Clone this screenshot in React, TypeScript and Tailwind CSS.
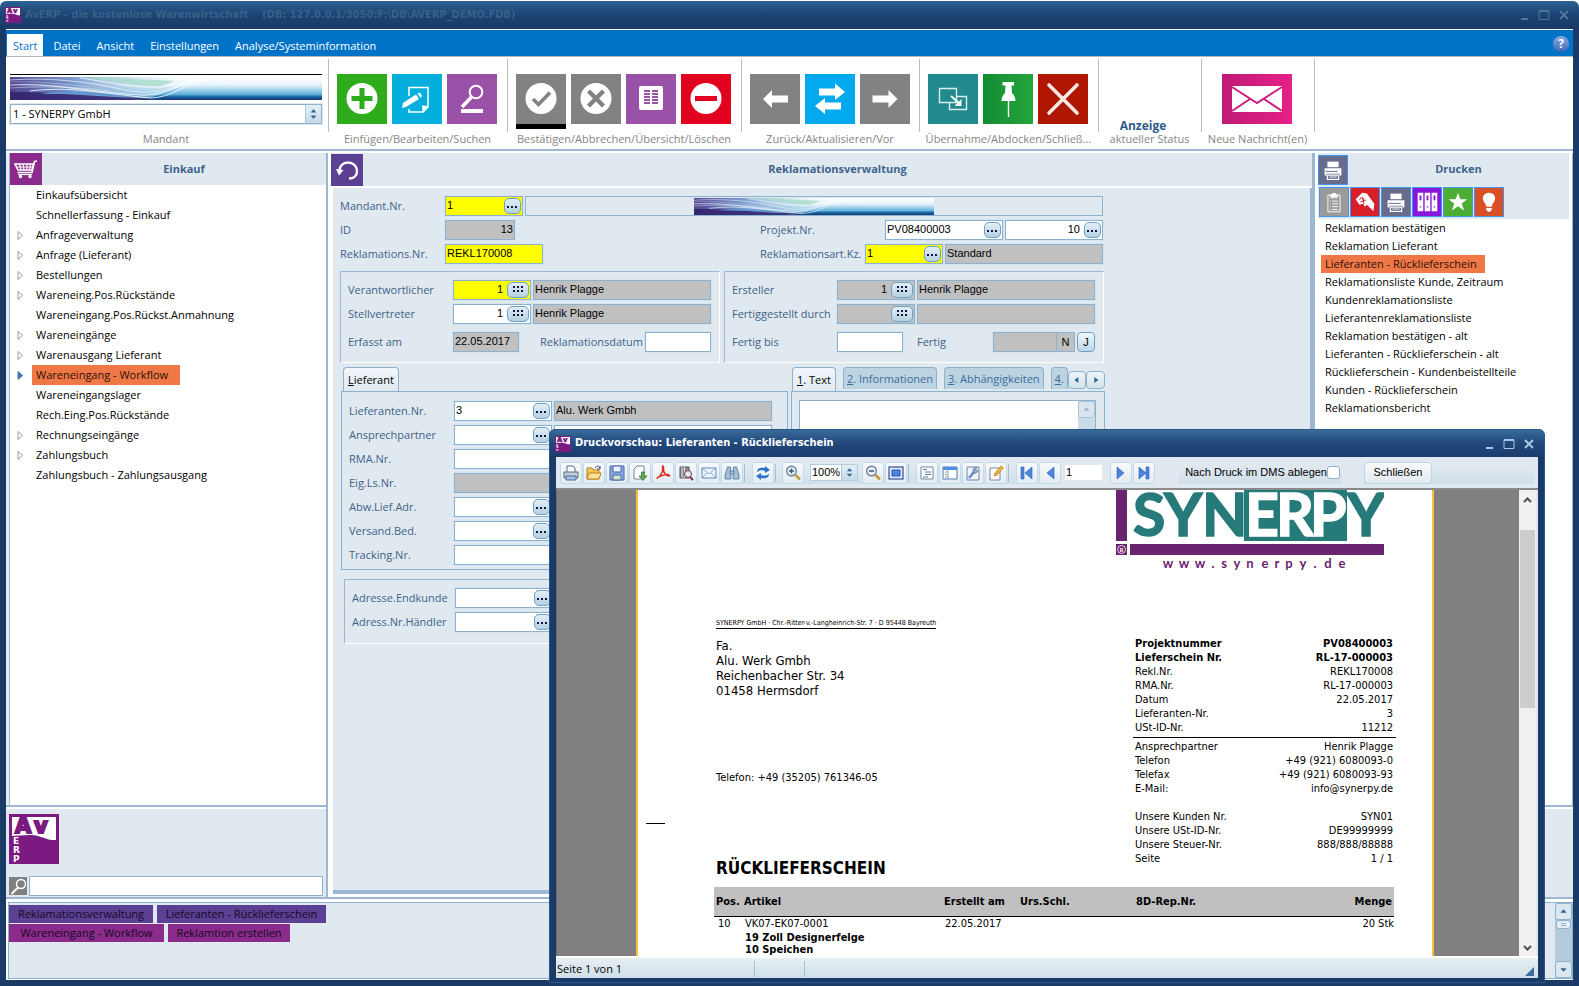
import React from 'react';

const SANS = "font-['Open_Sans','Noto_Sans',sans-serif]";
const ARIAL = "font-['Liberation_Sans',Arial,sans-serif]";
const TAHOMA = "font-['DejaVu_Sans_Condensed','DejaVu_Sans',sans-serif]";

/* ---------- Shared drawings ---------- */

const AvLogo = ({ className }: { className: string }) => (
    <svg viewBox="0 0 50 50" className={className} role="img" aria-label="AvERP">
        <rect width="50" height="50" fill="#7b1a80" />
        <path d="M3 3H47V26C38 27 30 20 20 21C13 21 8 22 3 22Z" fill="#fff" />
        <text x="6 25" y="19" fontSize="21" fontWeight="700" fontFamily="DejaVu Sans, sans-serif" fill="#7b1a80" stroke="#7b1a80" strokeWidth="2">Av</text>
        <g fontSize="9" fontWeight="700" fontFamily="DejaVu Sans, sans-serif" fill="#fff">
            <text x="4" y="30">E</text>
            <text x="4" y="39">R</text>
            <text x="4" y="48">P</text>
        </g>
    </svg>
);

const WaveBanner = ({ className, id }: { className: string; id: string }) => (
    <svg viewBox="0 0 312 23" preserveAspectRatio="none" className={className} aria-hidden="true">
        <defs>
            <linearGradient id={`${id}-sky`} x1="0" y1="0" x2="0" y2="1">
                <stop offset="0" stopColor="#ffffff" />
                <stop offset="0.35" stopColor="#e6f3fa" />
                <stop offset="0.75" stopColor="#62b2dc" />
                <stop offset="0.85" stopColor="#1c6ba8" />
                <stop offset="1" stopColor="#17356f" />
            </linearGradient>
            <linearGradient id={`${id}-left`} x1="0" y1="0" x2="1" y2="0">
                <stop offset="0" stopColor="#4f4390" />
                <stop offset="0.35" stopColor="#6f93cc" stopOpacity="0.9" />
                <stop offset="0.75" stopColor="#c9e2f0" stopOpacity="0.5" />
                <stop offset="1" stopColor="#ffffff" stopOpacity="0" />
            </linearGradient>
        </defs>
        <rect width="312" height="23" fill={`url(#${id}-sky)`} />
        <path d="M0 0H185C165 4 160 22 120 23H0Z" fill={`url(#${id}-left)`} />
        <path d="M60 1C100 0 120 10 150 9L165 4C140 2 120 3 100 0Z" fill="#a9dccb" opacity="0.8" />
        <path d="M0 15C40 14 80 20 140 21L120 23H0Z" fill="#32206b" opacity="0.85" />
        <path d="M30 17C60 13 90 16 130 19L110 20C80 17 60 17 30 17Z" fill="#5f97d0" />
        <g fill="none" stroke="#fff">
            <path d="M0 8C50 6 70 14 130 18C160 19 170 5 195 1" strokeWidth="1.2" opacity="0.7" />
            <path d="M0 3C40 0 80 5 110 12C140 20 165 12 185 2" strokeWidth="1" opacity="0.6" />
            <path d="M20 14C60 9 90 16 140 21C165 20 170 8 200 1" strokeWidth="1" opacity="0.8" />
            <path d="M70 1C100 5 120 11 150 10C170 8 180 1 225 6" strokeWidth="0.8" opacity="0.9" />
            <path d="M0 11C30 9 60 9 100 14" strokeWidth="1.2" opacity="0.4" />
            <path d="M0 5C30 4 50 7 80 10" strokeWidth="1" opacity="0.3" />
        </g>
    </svg>
);

const CartIcon = () => (
    <svg viewBox="0 0 32 32" className="size-8 bg-[#8b2b8b]" fill="none" stroke="#fff">
        <path d="M27 8L24.500 8.500L22 19.500H7.500" strokeWidth="1.600" />
        <path d="M5 11H23.500L22 17H8Z" strokeWidth="1.600" />
        <path d="M9.500 11L11 17M13 11L14 17M17 11V17M20.500 11L19.500 17M6 14H23" strokeWidth="1.200" />
        <path d="M8 21.500H22" strokeWidth="1.200" />
        <circle cx="10.500" cy="23.500" r="1.700" fill="#fff" stroke="none" />
        <circle cx="20" cy="23.500" r="1.700" fill="#fff" stroke="none" />
    </svg>
);

const PrinterIcon = () => (
    <svg viewBox="0 0 30 30" className="size-full">
        <rect width="30" height="30" fill="#676b8c" />
        <path d="M9 6H21V12H9Z" fill="#fff" />
        <path d="M6 13H24V21H22V19H8V21H6Z" fill="#fff" />
        <path d="M9 20.500H21V25H9Z" fill="none" stroke="#fff" strokeWidth="1.300" />
        <path d="M11 22H19M11 23.500H19M7 16.500H20" stroke="#676b8c" strokeWidth="1" />
        <path d="M11 22.500H19" stroke="#fff" strokeWidth="1" />
    </svg>
);

/* ---------- Window frame pieces ---------- */

const WindowControls = ({ color }: { color: string }) => (
    <div className={`flex items-center gap-2 ${color}`}>
        <button type="button" aria-label="Minimieren">
            <svg viewBox="0 0 12 12" className="size-3"><path d="M3 10H10" stroke="currentColor" strokeWidth="2" /></svg>
        </button>
        <button type="button" aria-label="Maximieren">
            <svg viewBox="0 0 12 12" className="size-3"><path d="M1 2.500H11V10.500H1Z" fill="none" stroke="currentColor" /><path d="M1 2H11" stroke="currentColor" strokeWidth="2" /></svg>
        </button>
        <button type="button" aria-label="Fenster schließen">
            <svg viewBox="0 0 12 12" className="size-3"><path d="M2 2L10 10M10 2L2 10" stroke="currentColor" strokeWidth="2" /></svg>
        </button>
    </div>
);

const Spinner = () => (
    <svg viewBox="0 0 16 18" className="h-full w-4 border-l border-[#a8c8dc] bg-gradient-to-b from-[#e4eff6] to-[#c6dae7]" preserveAspectRatio="none">
        <path d="M8 4L11 7.500H5ZM8 14L11 10.500H5Z" fill="#35679a" />
    </svg>
);

/* ---------- Ribbon ---------- */

const Tile = ({ label, bg, children, active }: { label: string; bg: string; children: React.ReactNode; active?: boolean }) => (
    <button type="button" aria-label={label} className={`h-[50px] w-[50px] shrink-0 ${bg} ${active ? 'shadow-[0_5px_0_#000]' : ''}`}>
        <svg viewBox="0 0 50 50" className="size-full" fill="none">{children}</svg>
    </button>
);

const RibbonGroup = ({ caption, width, children }: { caption: string; width: string; children: React.ReactNode }) => (
    <div className={`relative flex shrink-0 flex-col pt-[17px] ${width}`}>
        <div className="flex h-[57px] items-start justify-center gap-[5px] pr-[3px]">{children}</div>
        <div className="pr-[2px] text-center text-[11px] leading-4 whitespace-nowrap text-[#858585]">{caption}</div>
        <div className="absolute top-[2px] right-0 h-[73px] w-px bg-[#bdbdbd]" />
    </div>
);

const Ribbon = () => (
    <div className="flex h-[92px] bg-white">
        <div className="relative flex w-[323px] shrink-0 flex-col pt-[17px] pr-[7px] pl-1">
            <div className="h-px bg-black" />
            <WaveBanner id="mandant" className="mt-[2px] h-[23px] w-full" />
            <div className="mt-[4px] flex h-5 border border-[#8db2cf] shadow-[0_0_0_1px_#dbe8f2]">
                <select aria-label="Mandant" defaultValue="1" className="min-w-0 flex-1 appearance-none pl-[2px] text-[11px] leading-4 text-black outline-none">
                    <option value="1">1 - SYNERPY GmbH</option>
                </select>
                <Spinner />
            </div>
            <div className="mt-[7px] text-center text-[11px] leading-4 text-[#858585]">Mandant</div>
            <div className="absolute top-[2px] right-0 h-[73px] w-px bg-[#bdbdbd]" />
        </div>
        <RibbonGroup caption="Einfügen/Bearbeiten/Suchen" width="w-[179px]">
            <Tile label="Einfügen" bg="bg-[#2fac1c]">
                <circle cx="25" cy="24.500" r="15.500" fill="#fff" />
                <path d="M25 14V35M14.500 24.500H35.500" stroke="#2fac1c" strokeWidth="5" />
            </Tile>
            <Tile label="Bearbeiten" bg="bg-[#05afdd]">
                <path d="M17 22V13.500H36V33L31 38H17V35" stroke="#fff" strokeWidth="1.500" />
                <path d="M36 32L30 31.500L30.500 38Z" fill="#fff" />
                <path d="M11 29L24 20.500L27 25L14 33L10 34Z" fill="#fff" />
                <path d="M25.500 19.500L28 18.500L30 22L28.500 24Z" fill="#fff" />
            </Tile>
            <Tile label="Suchen" bg="bg-[#9a52a8]">
                <circle cx="29" cy="18" r="6.300" stroke="#fff" strokeWidth="2" />
                <path d="M24.500 23L15 33" stroke="#fff" strokeWidth="3.500" />
                <path d="M14 37H36" stroke="#fff" strokeWidth="4" />
            </Tile>
        </RibbonGroup>
        <RibbonGroup caption="Bestätigen/Abbrechen/Übersicht/Löschen" width="w-[234px]">
            <Tile label="Bestätigen" bg="bg-[#828282]" active>
                <circle cx="25" cy="24.500" r="15.500" fill="#fff" />
                <path d="M17 25L22.500 30.500L34 18.500" stroke="#828282" strokeWidth="3.600" />
            </Tile>
            <Tile label="Abbrechen" bg="bg-[#828282]">
                <circle cx="25" cy="24.500" r="15.500" fill="#fff" />
                <path d="M17.500 17L32.500 32M32.500 17L17.500 32" stroke="#828282" strokeWidth="4.400" />
            </Tile>
            <Tile label="Übersicht" bg="bg-[#9a52a8]">
                <rect x="13" y="12" width="24" height="24" rx="2" fill="#fff" />
                <path d="M18 17H24M18 20H24M18 23H24M18 26H24M18 29H24M26 17H32M26 20H32M26 23H32M26 26H32M26 29H32" stroke="#9a52a8" strokeWidth="2" />
            </Tile>
            <Tile label="Löschen" bg="bg-[#e2001f]">
                <circle cx="25" cy="24.500" r="15.500" fill="#fff" />
                <path d="M14 24.500H36" stroke="#e2001f" strokeWidth="5" />
            </Tile>
        </RibbonGroup>
        <RibbonGroup caption="Zurück/Aktualisieren/Vor" width="w-[178px]">
            <Tile label="Zurück" bg="bg-[#828282]">
                <path d="M13 25L22 16V21.500H38V28.500H22V34Z" fill="#fff" />
            </Tile>
            <Tile label="Aktualisieren" bg="bg-[#02a9ed]">
                <path d="M40 18L30 9.500V14.500H14V21.500H30V26Z" fill="#fff" />
                <path d="M10 32L20 24V28.500H36V35.500H20V40Z" fill="#fff" />
            </Tile>
            <Tile label="Vor" bg="bg-[#828282]">
                <path d="M37.500 25L28.500 16V21.500H12.500V28.500H28.500V34Z" fill="#fff" />
            </Tile>
        </RibbonGroup>
        <RibbonGroup caption="Übernahme/Abdocken/Schließ..." width="w-[179px]">
            <Tile label="Übernahme" bg="bg-[#22898f]">
                <path d="M11.500 14.500H28.500V28.500H11.500Z" stroke="#d9eeee" strokeWidth="1.400" />
                <path d="M28.500 22.500H38.500V35.500H21.500V28.500" stroke="#d9eeee" strokeWidth="1.400" />
                <path d="M23 22L32 30" stroke="#fff" strokeWidth="2" />
                <path d="M33.500 25V32H26.500Z" fill="#fff" />
            </Tile>
            <Tile label="Abdocken" bg="bg-gradient-to-r from-[#128c34] to-[#25a53c]">
                <path d="M19.500 8H31V11.500H28.500L29 19C31 21 32.500 23.500 32.500 27H18.500C18.500 23.500 20 21 22 19L22.500 11.500H19.500Z" fill="#fff" />
                <path d="M25.500 27V43" stroke="#fff" strokeWidth="1.400" />
            </Tile>
            <Tile label="Schließen" bg="bg-[#b01702]">
                <path d="M11 11L39 39M39 11L11 39" stroke="#fbe9e4" strokeWidth="3.600" strokeLinecap="round" />
            </Tile>
        </RibbonGroup>
        <RibbonGroup caption="aktueller Status" width="w-[103px]">
            <span className="self-end pr-3 text-[12px] leading-[10px] font-bold text-[#2f5b8b]">Anzeige</span>
        </RibbonGroup>
        <RibbonGroup caption="Neue Nachricht(en)" width="w-[113px]">
            <button type="button" aria-label="Neue Nachrichten" className="h-[50px] w-[70px] bg-gradient-to-r from-[#bf1a76] to-[#e62088]">
                <svg viewBox="0 0 70 50" className="size-full">
                    <rect x="10" y="12" width="50" height="26" fill="#fff" />
                    <path d="M10 13L35 29L60 13M10 37L28 25M60 37L42 25" fill="none" stroke="#cc1c7c" strokeWidth="2" />
                </svg>
            </button>
        </RibbonGroup>
    </div>
);

/* ---------- Left navigation ---------- */

const NAV = [
    { label: 'Einkaufsübersicht' },
    { label: 'Schnellerfassung - Einkauf' },
    { label: 'Anfrageverwaltung', sub: true },
    { label: 'Anfrage (Lieferant)', sub: true },
    { label: 'Bestellungen', sub: true },
    { label: 'Wareneing.Pos.Rückstände', sub: true },
    { label: 'Wareneingang.Pos.Rückst.Anmahnung' },
    { label: 'Wareneingänge', sub: true },
    { label: 'Warenausgang Lieferant', sub: true },
    { label: 'Wareneingang - Workflow', sub: true, active: true },
    { label: 'Wareneingangslager' },
    { label: 'Rech.Eing.Pos.Rückstände' },
    { label: 'Rechnungseingänge', sub: true },
    { label: 'Zahlungsbuch', sub: true },
    { label: 'Zahlungsbuch - Zahlungsausgang' },
];

const LeftPanel = () => (
    <aside className="flex w-[322px] shrink-0 flex-col border-r-2 border-[#9db7d3] bg-white">
        <div className="flex min-h-0 flex-1 flex-col border-b-2 border-[#9db7d3] bg-[#e6edf4] pl-[3px]">
            <div className="flex flex-1 flex-col border-l border-[#9db7d3] bg-white">
                <div className="flex h-8 items-center bg-[#e1e9f0]">
                    <CartIcon />
                    <h2 className="flex-1 text-center text-[11px] font-bold text-[#3c648c]">Einkauf</h2>
                </div>
                <ul>
                    {NAV.map((item) => (
                        <li key={item.label} className="flex h-5 items-center">
                            <span className="w-[22px] pl-[7px]">
                                {item.sub && (
                                    <svg viewBox="0 0 7 9" className="h-[9px] w-[7px]">
                                        <path d="M1 0.500L5.500 4.500L1 8.500Z" fill={item.active ? '#3f78b8' : '#fff'} stroke={item.active ? '#3f78b8' : '#9a9a9a'} />
                                    </svg>
                                )}
                            </span>
                            <button type="button" className={`h-5 pl-1 text-[11px] leading-5 ${item.active ? 'bg-[#f07746] pr-3 text-[#2b1208]' : 'text-black'}`}>
                                {item.label}
                            </button>
                        </li>
                    ))}
                </ul>
            </div>
        </div>
        <div className="mt-[2px] flex h-[88px] flex-col justify-between bg-[#e1e9f0] pt-[5px] pr-[3px] pb-[1px] pl-[3px]">
            <AvLogo className="size-[50px]" />
            <div className="flex items-center gap-[2px]">
                <svg viewBox="0 0 18 18" className="size-[18px] bg-[#808080]" fill="none" stroke="#fff">
                    <circle cx="12" cy="7" r="4.500" strokeWidth="1.500" />
                    <path d="M9 10.500L2.500 17" strokeWidth="2" />
                </svg>
                <input aria-label="Suche" className="h-5 min-w-0 flex-1 border border-[#8db2cf] bg-white px-1 text-[11px] outline-none" />
            </div>
        </div>
    </aside>
);

/* ---------- Form ---------- */

type FieldProps = {
    id: string;
    label?: string;
    value?: string;
    width: string;
    tone?: 'white' | 'yellow' | 'gray';
    right?: boolean;
    picker?: 'dots' | 'grid';
};

const TONES = { white: 'bg-white', yellow: 'bg-[#ffff00]', gray: 'bg-[#c0c0c0]' };

const Field = ({ id, label, value = '', width, tone = 'white', right, picker }: FieldProps) => (
    <div className={`flex h-5 items-center border border-[#8db2cf] shadow-[0_0_0_1px_#d6e4ef] ${TONES[tone]} ${width}`}>
        <input
            id={id}
            aria-label={label}
            defaultValue={value}
            readOnly={tone === 'gray'}
            className={`${ARIAL} h-full w-0 min-w-0 flex-1 bg-transparent px-px pb-[2px] text-[11px] text-black outline-none ${right ? 'text-right' : ''}`}
        />
        {picker && (
            <button
                type="button"
                aria-label={`${label ?? id} auswählen`}
                className={`mr-px ml-[3px] flex h-4 shrink-0 items-center justify-center rounded-[5px] border border-[#6fa1c6] bg-gradient-to-b from-[#e2eff7] to-[#b4d1e3] ${picker === 'grid' ? 'w-[22px]' : 'w-[17px]'}`}
            >
                {picker === 'grid' ? (
                    <svg viewBox="0 0 12 8" className="h-2 w-3" fill="#14143c">
                        <path d="M1 0H3V2H1ZM5 0H7V2H5ZM9 0H11V2H9ZM1 4H3V6H1ZM5 4H7V6H5ZM9 4H11V6H9Z" />
                    </svg>
                ) : (
                    <svg viewBox="0 0 11 4" className="mt-[2px] h-1 w-[11px]" fill="#14143c">
                        <path d="M0 1H2V3H0ZM4 1H6V3H4ZM8 1H10V3H8Z" />
                    </svg>
                )}
            </button>
        )}
    </div>
);

const Label = ({ htmlFor, width, children }: { htmlFor: string; width: string; children: React.ReactNode }) => (
    <label htmlFor={htmlFor} className={`shrink-0 text-[11px] leading-5 whitespace-nowrap text-[#3d6289] ${width}`}>{children}</label>
);

const GROUP = 'border-t border-l border-r border-b border-t-[#9db7d3] border-l-[#9db7d3] border-r-white border-b-white';

const SUPPLIER_ROWS: { id: string; label: string; value?: string; picker?: 'dots'; tone?: 'gray' }[] = [
    { id: 'lieferant', label: 'Lieferanten.Nr.', value: '3', picker: 'dots' },
    { id: 'ansprech', label: 'Ansprechpartner', picker: 'dots' },
    { id: 'rma', label: 'RMA.Nr.' },
    { id: 'eigls', label: 'Eig.Ls.Nr.', tone: 'gray' },
    { id: 'abw', label: 'Abw.Lief.Adr.', picker: 'dots' },
    { id: 'versand', label: 'Versand.Bed.', picker: 'dots' },
    { id: 'tracking', label: 'Tracking.Nr.' },
];

const Tab = ({ nr, text, active }: { nr: string; text: string; active?: boolean }) => (
    <button
        type="button"
        role="tab"
        aria-selected={!!active}
        className={`shrink-0 rounded-t-[4px] border border-b-0 border-[#8db2cf] text-[11px] leading-5 whitespace-nowrap ${active ? 'h-6 bg-gradient-to-b from-[#f2f6fa] to-[#e1e9f0] px-1 text-black' : 'h-[22px] bg-[#bcd3e2] px-[3px] text-[#3d6d9c]'}`}
    >
        <span className="underline">{nr}</span>{text}
    </button>
);

const ClaimForm = () => (
    <form className="w-[770px] pt-2 pl-[7px]" onSubmit={(e) => e.preventDefault()}>
        <div className="flex flex-col gap-1">
            <div className="flex">
                <Label htmlFor="mandant" width="w-[105px]">Mandant.Nr.</Label>
                <Field id="mandant" value="1" width="w-[78px]" tone="yellow" picker="dots" />
                <div className="ml-[2px] flex h-5 flex-1 border border-[#8db2cf] pl-[168px]">
                    <WaveBanner id="form" className="mt-[1px] h-[17px] w-[240px]" />
                </div>
            </div>
            <div className="flex">
                <Label htmlFor="rid" width="w-[105px]">ID</Label>
                <Field id="rid" value="13" width="w-[70px]" tone="gray" right />
                <div className="ml-auto flex w-[343px] gap-[2px]">
                    <Label htmlFor="projekt" width="w-[123px]">Projekt.Nr.</Label>
                    <Field id="projekt" value="PV08400003" width="w-[118px]" picker="dots" />
                    <Field id="projekt-pos" label="Projekt Position" value="10" width="flex-1" right picker="dots" />
                </div>
            </div>
            <div className="flex">
                <Label htmlFor="rekl" width="w-[105px]">Reklamations.Nr.</Label>
                <Field id="rekl" value="REKL170008" width="w-[98px]" tone="yellow" />
                <div className="ml-auto flex w-[343px] gap-[2px]">
                    <Label htmlFor="art" width="w-[103px]">Reklamationsart.Kz.</Label>
                    <Field id="art" value="1" width="w-[78px]" tone="yellow" picker="dots" />
                    <Field id="art-text" label="Reklamationsart" value="Standard" width="flex-1" tone="gray" />
                </div>
            </div>
        </div>

        <div className="mt-[7px] -mr-px flex gap-1">
            <fieldset className={`flex h-[92px] flex-1 flex-col gap-1 pt-2 pr-2 pl-[7px] ${GROUP}`}>
                <div className="flex gap-[2px]">
                    <Label htmlFor="verantw" width="w-[103px]">Verantwortlicher</Label>
                    <Field id="verantw" value="1" width="w-[78px]" tone="yellow" right picker="grid" />
                    <Field id="verantw-name" label="Name Verantwortlicher" value="Henrik Plagge" width="flex-1" tone="gray" />
                </div>
                <div className="flex gap-[2px]">
                    <Label htmlFor="stellv" width="w-[103px]">Stellvertreter</Label>
                    <Field id="stellv" value="1" width="w-[78px]" right picker="grid" />
                    <Field id="stellv-name" label="Name Stellvertreter" value="Henrik Plagge" width="flex-1" tone="gray" />
                </div>
                <div className="mt-1 flex">
                    <Label htmlFor="erfasst" width="w-[105px]">Erfasst am</Label>
                    <Field id="erfasst" value="22.05.2017" width="w-[66px]" tone="gray" />
                    <div className="ml-auto flex">
                        <Label htmlFor="rekldatum" width="w-[105px]">Reklamationsdatum</Label>
                        <Field id="rekldatum" width="w-[66px]" />
                    </div>
                </div>
            </fieldset>
            <fieldset className={`flex h-[92px] flex-1 flex-col gap-1 pt-2 pr-2 pl-[7px] ${GROUP}`}>
                <div className="flex gap-[2px]">
                    <Label htmlFor="ersteller" width="w-[103px]">Ersteller</Label>
                    <Field id="ersteller" value="1" width="w-[78px]" tone="gray" right picker="grid" />
                    <Field id="ersteller-name" label="Name Ersteller" value="Henrik Plagge" width="flex-1" tone="gray" />
                </div>
                <div className="flex gap-[2px]">
                    <Label htmlFor="fertigd" width="w-[103px]">Fertiggestellt durch</Label>
                    <Field id="fertigd" width="w-[78px]" tone="gray" right picker="grid" />
                    <Field id="fertigd-name" label="Name Fertigsteller" width="flex-1" tone="gray" />
                </div>
                <div className="mt-1 flex">
                    <Label htmlFor="fertigbis" width="w-[105px]">Fertig bis</Label>
                    <Field id="fertigbis" width="w-[66px]" />
                    <div className="ml-auto flex">
                        <Label htmlFor="fertig" width="w-[76px]">Fertig</Label>
                        <Field id="fertig" width="w-[64px]" tone="gray" />
                        <button type="button" className={`${ARIAL} w-[18px] border border-l-0 border-[#8db2cf] bg-[#c0c0c0] text-[11px] leading-[18px]`}>N</button>
                        <button type="button" className={`${ARIAL} ml-[2px] w-[18px] rounded-[4px] border border-[#6fa1c6] bg-gradient-to-b from-[#f0f7fb] to-[#bdd6e6] text-[11px] leading-[18px]`}>J</button>
                    </div>
                </div>
            </fieldset>
        </div>

        <div className="mt-1 -mr-[2px] flex gap-[3px] pl-px">
            <div className="w-[447px] shrink-0">
                <div role="tablist" className="flex h-6 pl-[2px]"><Tab nr="L" text="ieferant" active /></div>
                <div className="flex h-[179px] flex-col gap-1 border border-[#8db2cf] pt-[9px] pl-[7px]">
                    {SUPPLIER_ROWS.map((row) => (
                        <div key={row.id} className="flex gap-[2px]">
                            <Label htmlFor={row.id} width="w-[103px]">{row.label}</Label>
                            <Field id={row.id} value={row.value} width="w-[98px]" tone={row.tone} picker={row.picker} />
                            <Field id={`${row.id}-text`} label={`${row.label} Text`} value={row.value ? 'Alu. Werk Gmbh' : ''} width="w-[218px]" tone={row.value ? 'gray' : 'white'} />
                        </div>
                    ))}
                </div>
            </div>
            <div className="min-w-0 flex-1">
                <div role="tablist" className="flex h-6 gap-[7px] pl-[1px]">
                    <Tab nr="1" text=". Text" active />
                    <Tab nr="2" text=". Informationen" />
                    <Tab nr="3" text=". Abhängigkeiten" />
                    <div className="flex flex-1">
                        <Tab nr="4" text="." />
                        {['M9 5V11L5 8Z', 'M7 5V11L11 8Z'].map((d) => (
                            <button key={d} type="button" aria-label="Reiter blättern" className="mt-1 h-[18px] min-w-[16px] flex-1 rounded-[4px] border border-[#8db2cf] bg-gradient-to-b from-[#f0f5f9] to-[#d3e2ec]">
                                <svg viewBox="0 0 16 16" className="size-full"><path d={d} fill="#2d6191" /></svg>
                            </button>
                        ))}
                    </div>
                </div>
                <div className="h-[179px] border border-[#8db2cf] p-2 pl-[7px]">
                    <div className="flex h-40 border border-[#8db2cf] bg-white">
                        <textarea aria-label="Text" className="min-w-0 flex-1 resize-none outline-none" />
                        <div className="w-[17px] bg-[#cbdce8]">
                            <svg viewBox="0 0 17 17" className="size-[17px] rounded-[3px] border border-[#a9c5d8] bg-[#d9e5ee]"><path d="M8.500 6L12 10H5Z" fill="#a2b9cb" /></svg>
                        </div>
                    </div>
                </div>
            </div>
        </div>

        <fieldset className={`mt-[9px] ml-1 flex h-[65px] w-[444px] flex-col gap-1 pt-2 pl-[7px] ${GROUP}`}>
            <div className="flex">
                <Label htmlFor="endkunde" width="w-[103px]">Adresse.Endkunde</Label>
                <Field id="endkunde" width="w-[98px]" picker="dots" />
            </div>
            <div className="flex">
                <Label htmlFor="haendler" width="w-[103px]">Adress.Nr.Händler</Label>
                <Field id="haendler" width="w-[98px]" picker="dots" />
            </div>
        </fieldset>
    </form>
);

/* ---------- Right panel ---------- */

const REPORTS = [
    'Reklamation bestätigen',
    'Reklamation Lieferant',
    'Lieferanten - Rücklieferschein',
    'Reklamationsliste Kunde, Zeitraum',
    'Kundenreklamationsliste',
    'Lieferantenreklamationsliste',
    'Reklamation bestätigen - alt',
    'Lieferanten - Rücklieferschein - alt',
    'Rücklieferschein - Kundenbeistellteile',
    'Kunden - Rücklieferschein',
    'Reklamationsbericht',
];

const PANEL_TOOLS = [
    {
        name: 'Liste', bg: 'bg-[#9a9a9a]', art: (
            <g fill="none" stroke="#fff">
                <path d="M8.500 7.500H21.500V25.500H8.500Z" />
                <path d="M11 14H12M11 17H12M11 20H12M11 23H12M13 14H19.500M13 17H19.500M13 20H19.500M13 23H19.500M11 10.500H19" />
                <path d="M13 6H17V8H19V9H11V8H13Z" fill="#fff" />
            </g>
        ),
    },
    {
        name: 'Etikett', bg: 'bg-[#d81e28]', art: (
            <g>
                <path d="M12 5L17 6L25 17L24 25L17 18L15 20L13 17L9 18L5 12Z" fill="#fff" />
                <path d="M9 13L11 10L14 12L13 15M12 10L14 17M10 15L16 13" fill="none" stroke="#d81e28" />
            </g>
        ),
    },
    { name: 'Drucken', bg: 'bg-[#676b8c]', art: null },
    {
        name: 'Ordner', bg: 'bg-[#8a16dc]', art: (
            <g>
                <path d="M5 5H11V25H5ZM12.500 5H18.500V25H12.500ZM20 5H26V25H20Z" fill="#fff" />
                <path d="M7 8H9V13H7ZM14.500 8H16.500V13H14.500ZM22 8H24V13H22ZM7 21L8 19L9 21ZM14.500 21L15.500 19L16.500 21ZM22 21L23 19L24 21Z" fill="#8a16dc" />
            </g>
        ),
    },
    { name: 'Favoriten', bg: 'bg-[#4cae35]', art: <path d="M15 5L17.500 12H25L19 16.500L21.500 24L15 19.500L8.500 24L11 16.500L5 12H12.500Z" fill="#fff" /> },
    {
        name: 'Hinweis', bg: 'bg-[#d94f26]', art: (
            <path d="M15 5C10.500 5 8 8.500 8.500 12C9 15 12 17 12 20H18C18 17 21 15 21.500 12C22 8.500 19.500 5 15 5ZM12 21.500H18V23.500L16 25.500H14L12 23.500Z" fill="#fff" />
        ),
    },
];

const RightPanel = () => (
    <aside className="flex w-[258px] shrink-0 flex-col bg-white pl-[3px]">
        <div className="flex min-h-0 flex-1 flex-col border-r border-b-2 border-[#9db7d3] pr-[3px]">
            <div className="h-[66px] bg-[#e1e9f0]">
                <div className="flex h-[33px] items-center">
                    <div className="size-[30px] border border-[#3f97f5]"><PrinterIcon /></div>
                    <h2 className="flex-1 text-center text-[11px] font-bold text-[#3c648c]">Drucken</h2>
                </div>
                <div className="flex gap-px pt-px pl-px">
                    {PANEL_TOOLS.map((tool) => (
                        <button key={tool.name} type="button" aria-label={tool.name} className={`size-[30px] border border-[#3f97f5] ${tool.bg}`}>
                            {tool.art ? <svg viewBox="0 0 30 30" className="size-full">{tool.art}</svg> : <PrinterIcon />}
                        </button>
                    ))}
                </div>
            </div>
            <ul className="pl-[3px]">
                {REPORTS.map((name, i) => (
                    <li key={name} className="flex h-[18px]">
                        <button type="button" className={`pl-1 text-[11px] leading-[18px] whitespace-nowrap ${i === 2 ? 'bg-[#f07746] pr-2 text-[#2b1208]' : 'text-black'}`}>{name}</button>
                    </li>
                ))}
            </ul>
        </div>
        <div className="mt-[2px] -ml-[3px] h-[88px] bg-[#e1e9f0]" />
    </aside>
);

/* ---------- Print preview window ---------- */

const TOOL_ICONS: Record<string, React.ReactNode> = {
    Drucken: (
        <g stroke="#5b6b80">
            <path d="M4 7V1H10L12 3V7" fill="#fff" />
            <path d="M1 7H15V13H1Z" fill="#c4cddb" />
            <path d="M3 11H13V15H3Z" fill="#9cc4ee" />
        </g>
    ),
    Öffnen: (
        <g stroke="#b8801c">
            <path d="M1 3H6L7 5H13V14H1Z" fill="#f4c95c" />
            <path d="M1 14L3 8H15L13 14Z" fill="#fbe29a" />
            <path d="M9 3C11 0 13 1 14 3M14 1V4H11" fill="none" stroke="#446" />
        </g>
    ),
    Speichern: (
        <g stroke="#4a66a8">
            <path d="M1 1H15V15H1Z" fill="#86a9e8" />
            <path d="M4 1H12V7H4Z" fill="#e9f2ff" />
            <path d="M4 10H12V15H4Z" fill="#cfe8c0" />
        </g>
    ),
    Export: (
        <g>
            <path d="M5 1H12V14H2V4Z" fill="#fff" stroke="#75839a" />
            <path d="M9.500 7H12.500V11H15L11 15.500L7 11H9.500Z" fill="#5ca851" stroke="#33722c" strokeWidth="0.700" />
        </g>
    ),
    PDF: <path d="M1.500 13.500C5 12 8.500 7 7.500 2.500C7 0 9 1 8.500 4C8 8 12 12 14.500 10.500C14 8.500 6 10 2 13" fill="none" stroke="#e02b24" strokeWidth="1.500" />,
    Archiv: (
        <g>
            <path d="M2 2H11V13H2Z" fill="#8a8f94" stroke="#4f5458" />
            <path d="M4 2V13M6.500 2V13" stroke="#ddd" />
            <circle cx="10" cy="9" r="3.500" fill="#d5f0e8" stroke="#8a1f5c" />
            <path d="M12 12L15 15" stroke="#8a1f5c" strokeWidth="2" />
        </g>
    ),
    Mail: (
        <g stroke="#5c86c4">
            <path d="M1 3H15V13H1Z" fill="#eef5fd" />
            <path d="M1 3L8 9L15 3M1 13L6 8M15 13L10 8" fill="none" strokeWidth="0.700" />
        </g>
    ),
    Suchen: (
        <g fill="#a5bfdb" stroke="#52749c" strokeWidth="0.800">
            <path d="M3.500 2H6.500V6L7 14H1V10Z" />
            <path d="M9.500 2H12.500L15 10V14H9V6Z" />
            <path d="M6 6H10V9H6Z" />
        </g>
    ),
    Aktualisieren: <path d="M2 7C2 3 6 2 10 3V1L15 5L10 8V6C7 5 5 5 2 7ZM14 9C14 13 10 14 6 13V15L1 11L6 8V10C9 11 11 11 14 9Z" fill="#2f6fce" />,
    Vergrößern: (
        <g>
            <circle cx="6.500" cy="6" r="4.800" fill="#e6f0f8" stroke="#6a7f96" strokeWidth="1.400" />
            <path d="M4 6H9M6.500 3.500V8.500" stroke="#3b5573" strokeWidth="1.400" />
            <path d="M10.500 10L15 14.500" stroke="#c79a3a" strokeWidth="2.600" />
        </g>
    ),
    Verkleinern: (
        <g>
            <circle cx="6.500" cy="6" r="4.800" fill="#e6f0f8" stroke="#6a7f96" strokeWidth="1.400" />
            <path d="M4 6H9" stroke="#3b5573" strokeWidth="1.400" />
            <path d="M10.500 10L15 14.500" stroke="#c79a3a" strokeWidth="2.600" />
        </g>
    ),
    Vollbild: (
        <g>
            <path d="M1 2H15V14H1Z" fill="#dce8f8" stroke="#5d6ea6" strokeWidth="1.500" />
            <path d="M4 5H12V11H4Z" fill="#4b86e2" stroke="#2a58ae" />
        </g>
    ),
    Gliederung: (
        <g>
            <path d="M2 2H14V14H2Z" fill="#fff" stroke="#7686a0" />
            <path d="M4 4.500H8M6 7H12M6 9.500H12M4 12H9" stroke="#5a7db4" />
        </g>
    ),
    Miniaturen: (
        <g>
            <path d="M1 2H15V14H1Z" fill="#fff" stroke="#4d7cb6" />
            <path d="M1 3.500H15" stroke="#4d8fe0" strokeWidth="3" />
            <path d="M6 5V14M3 7H5M3 9.500H5M3 12H5" stroke="#8a97a8" />
        </g>
    ),
    Einstellungen: (
        <g>
            <path d="M2 2H14V15H2Z" fill="#eef4fb" stroke="#6f83a8" />
            <path d="M4 13L9 7" stroke="#5b8ad0" strokeWidth="2.400" />
            <path d="M8 4C9 2.500 11 2.500 12 3L10.500 5L12 6L13 5C13 8 10 9 8 7.500Z" fill="#8fa6c4" stroke="#506a91" strokeWidth="0.600" />
        </g>
    ),
    Bearbeiten: (
        <g>
            <path d="M2 3H12V15H2Z" fill="#fff" stroke="#7686a0" />
            <path d="M6 11L7 8L13 1L15.500 3L9 10Z" fill="#f2b33a" stroke="#b0741d" strokeWidth="0.700" />
        </g>
    ),
    Erste: <path d="M2 2H5V14H2ZM13 2V14L6 8Z" fill="#4a86dc" stroke="#2a5cb8" strokeWidth="0.600" />,
    Zurück: <path d="M12 2V14L5 8Z" fill="#4a86dc" stroke="#2a5cb8" strokeWidth="0.600" />,
    Weiter: <path d="M4 2V14L11 8Z" fill="#4a86dc" stroke="#2a5cb8" strokeWidth="0.600" />,
    Letzte: <path d="M3 2V14L10 8ZM10 2H13V14H10Z" fill="#4a86dc" stroke="#2a5cb8" strokeWidth="0.600" />,
};

const ToolButtons = ({ names }: { names: string[] }) => (
    <div className="flex gap-px">
        {names.map((name) => (
            <button key={name} type="button" aria-label={name} className="flex h-[22px] w-[22px] items-center justify-center rounded-[3px] border border-[#c3dbe8] bg-gradient-to-b from-[#f7fafc] to-[#e3ecf2]">
                <svg viewBox="0 0 16 16" className="size-4">{TOOL_ICONS[name]}</svg>
            </button>
        ))}
    </div>
);

const PreviewToolbar = () => (
    <div className="flex h-[33px] shrink-0 items-center border-b-2 border-[#8a8a8a] bg-[#e1e9f0] pl-1">
        <div className="flex items-center bg-gradient-to-b from-[#e4ebf1] to-[#d0dfe9]">
            <ToolButtons names={['Drucken', 'Öffnen', 'Speichern', 'Export', 'PDF', 'Archiv', 'Mail', 'Suchen']} />
            <div className="mr-[7px] ml-px h-[18px] w-px bg-[#9fc0d5]" />
            <ToolButtons names={['Aktualisieren']} />
            <div className="mr-[6px] ml-px h-[18px] w-px bg-[#9fc0d5]" />
            <ToolButtons names={['Vergrößern']} />
            <div className="mr-1 ml-[6px] flex h-[17px] w-[48px] border border-[#b5cedd] bg-white">
                <input aria-label="Zoom" defaultValue="100%" className={`${ARIAL} w-0 min-w-0 flex-1 pl-px text-[11px] outline-none`} />
                <Spinner />
            </div>
            <ToolButtons names={['Verkleinern', 'Vollbild']} />
            <div className="mr-[7px] ml-px h-[18px] w-px bg-[#9fc0d5]" />
            <ToolButtons names={['Gliederung', 'Miniaturen', 'Einstellungen', 'Bearbeiten']} />
            <div className="mr-[7px] ml-px h-[18px] w-px bg-[#9fc0d5]" />
            <ToolButtons names={['Erste', 'Zurück']} />
        </div>
        <input aria-label="Seite" defaultValue="1" className={`${ARIAL} mr-2 ml-1 h-[15px] w-[37px] bg-white px-px text-[11px] outline-none`} />
        <ToolButtons names={['Weiter', 'Letzte']} />
        <div className="ml-6 flex h-[22px] w-[163px] items-center justify-end bg-gradient-to-b from-[#e4ebf1] to-[#d0dfe9]">
            <label htmlFor="dms" className={`${ARIAL} text-[11px] whitespace-nowrap text-black`}>Nach Druck im DMS ablegen</label>
            <input id="dms" type="checkbox" className="mr-[2px] size-[13px] appearance-none rounded-[3px] border border-[#8db2cf] bg-white" />
        </div>
        <div className="mr-1 ml-[22px] flex flex-1 bg-gradient-to-b from-[#e4ebf1] to-[#d0dfe9]">
            <button type="button" className={`${ARIAL} h-[22px] w-[68px] rounded-[4px] border border-[#b9d5e4] bg-gradient-to-b from-[#f8fafc] to-[#e2ebf1] text-[11px]`}>Schließen</button>
        </div>
    </div>
);

const SynerpyLogo = () => (
    <svg viewBox="0 0 268 81" className="block h-[81px] w-[268px]" role="img" aria-label="SYNERPY">
        <path d="M0 0H11V51H0ZM0 54H11V65H0ZM14 54H268V65H14Z" fill="#6a246f" />
        <rect x="128" width="103" height="51" fill="#267a79" />
        <g fontFamily="Lato, sans-serif" fontWeight="700" fontSize="59" strokeWidth="1.5">
            <text x="17 48 86" y="46" fill="#267a79" stroke="#267a79">SYN</text>
            <text x="129 160 194" y="46" fill="#fff" stroke="#fff">ERP</text>
            <text x="231" y="46" fill="#267a79" stroke="#267a79">Y</text>
        </g>
        <circle cx="5.500" cy="59.500" r="4" fill="none" stroke="#fff" strokeWidth="0.800" />
        <text x="5.500" y="62" fontSize="6" fontFamily="Lato, sans-serif" fontWeight="700" textAnchor="middle" fill="#fff">R</text>
        <text x="52 68 84 97 108 121 134 149 161 173 187 199 212 226" y="78" fontSize="13" fontFamily="Lato, sans-serif" fontWeight="700" textAnchor="middle" fill="#6a246f">www.synerpy.de</text>
    </svg>
);

const InfoRow = ({ name, value, bold }: { name: string; value: string; bold?: boolean }) => (
    <div className={`flex justify-between ${bold ? 'font-bold' : ''}`}>
        <dt>{name}</dt>
        <dd>{value}</dd>
    </div>
);

const Sheet = () => (
    <article className={`${TAHOMA} relative flex w-[798px] shrink-0 flex-col overflow-hidden border-x-2 border-[#fdc035] bg-white text-[11px] leading-[14px] text-black`}>
        <div className="flex h-[81px] justify-end pr-[48px]"><SynerpyLogo /></div>
        <div className="flex justify-between pr-[36px] pl-[78px]">
            <div className="pt-[48px]">
                <div className="border-b border-black text-[7px] leading-[9px] whitespace-nowrap">SYNERPY GmbH · Chr.-Ritter-v.-Langheinrich-Str. 7 · D 95448 Bayreuth</div>
                <address className="mt-[9px] text-[13px] leading-[15px] whitespace-nowrap not-italic">
                    Fa.<br />Alu. Werk Gmbh<br />Reichenbacher Str. 34<br />01458 Hermsdorf
                </address>
                <div className="mt-[73px]">Telefon: +49 (35205) 761346-05</div>
            </div>
            <div className="w-[263px] pt-[66px]">
                <dl className="border-b border-black pr-[3px] pb-[2px] pl-[2px]">
                    <InfoRow bold name="Projektnummer" value="PV08400003" />
                    <InfoRow bold name="Lieferschein Nr." value="RL-17-000003" />
                    <InfoRow name="Rekl.Nr." value="REKL170008" />
                    <InfoRow name="RMA.Nr." value="RL-17-000003" />
                    <InfoRow name="Datum" value="22.05.2017" />
                    <InfoRow name="Lieferanten-Nr." value="3" />
                    <InfoRow name="USt-ID-Nr." value="11212" />
                </dl>
                <dl className="pt-[2px] pr-[3px] pl-[2px]">
                    <InfoRow name="Ansprechpartner" value="Henrik Plagge" />
                    <InfoRow name="Telefon" value="+49 (921) 6080093-0" />
                    <InfoRow name="Telefax" value="+49 (921) 6080093-93" />
                    <InfoRow name="E-Mail:" value="info@synerpy.de" />
                </dl>
                <dl className="pt-[14px] pr-[3px] pl-[2px]">
                    <InfoRow name="Unsere Kunden Nr." value="SYN01" />
                    <InfoRow name="Unsere USt-ID-Nr." value="DE99999999" />
                    <InfoRow name="Unsere Steuer-Nr." value="888/888/88888" />
                    <InfoRow name="Seite" value="1 / 1" />
                </dl>
            </div>
        </div>
        {/* fold mark */}
        <div className="absolute top-[333px] left-2 h-px w-[19px] bg-black" />
        <h1 className="-mt-2 pl-[78px] text-[17px] leading-5 font-bold">RÜCKLIEFERSCHEIN</h1>
        <table className="mt-[9px] mr-[38px] ml-[76px] table-fixed border-collapse text-left">
            <colgroup>
                <col className="w-[28px]" />
                <col className="w-[200px]" />
                <col className="w-[76px]" />
                <col className="w-[116px]" />
                <col className="w-[110px]" />
                <col />
            </colgroup>
            <thead>
                <tr className="h-[29px] border-b border-black bg-[#c0c0c0] whitespace-nowrap">
                    <th className="p-0 pt-[2px] pl-[2px]">Pos.</th>
                    <th className="p-0 pt-[2px] pl-[2px]">Artikel</th>
                    <th className="p-0 pt-[2px] pl-[2px]">Erstellt am</th>
                    <th className="p-0 pt-[2px] pl-[2px]">Urs.Schl.</th>
                    <th className="p-0 pt-[2px] pl-[2px]">8D-Rep.Nr.</th>
                    <th className="p-0 pt-[2px] pr-[2px] text-right">Menge</th>
                </tr>
            </thead>
            <tbody>
                <tr className="h-4">
                    <td className="p-0 pl-[4px]">10</td>
                    <td className="p-0 pl-[3px]">VK07-EK07-0001</td>
                    <td className="p-0 pl-[3px]">22.05.2017</td>
                    <td className="p-0" />
                    <td className="p-0" />
                    <td className="p-0 text-right">20 Stk</td>
                </tr>
                <tr>
                    <td className="p-0" />
                    <td className="p-0 pl-[3px] leading-[12px] font-bold">19 Zoll Designerfelge<br />10 Speichen</td>
                </tr>
            </tbody>
        </table>
    </article>
);

const PrintPreview = () => (
    <section className="absolute top-[429px] right-[34px] bottom-[3px] left-[549px] flex flex-col overflow-hidden rounded-t-[6px] border border-[#28588a] bg-[#1a3a68] px-[6px] pb-1">
        <header className="-mx-[6px] flex h-[27px] shrink-0 items-center gap-1 bg-gradient-to-b from-[#3a6b99] via-[#21487b] to-[#1b3c6c] pr-[9px] pl-[5px]">
            <AvLogo className="size-4" />
            <h2 className={`${TAHOMA} flex-1 text-[11px] font-bold text-white`}>Druckvorschau: Lieferanten - Rücklieferschein</h2>
            <WindowControls color="text-[#a9c9e6]" />
        </header>
        <PreviewToolbar />
        <div className="flex min-h-0 flex-1 border-r-2 border-l border-r-[#e1e9f0] border-l-[#6b6b6b] bg-[#808080] pl-[79px]">
            <Sheet />
            <div className="ml-auto flex w-[17px] flex-col items-center bg-[#f0f0f0]">
                <svg viewBox="0 0 17 40" className="h-10 w-[17px] shrink-0"><path d="M5 12L8.500 8.500L12 12" fill="none" stroke="#505050" strokeWidth="2" /></svg>
                <div className="h-[178px] w-[15px] bg-[#cdcdcd]" />
                <svg viewBox="0 0 17 17" className="mt-auto size-[17px]"><path d="M5 7L8.500 10.500L12 7" fill="none" stroke="#505050" strokeWidth="2" /></svg>
            </div>
        </div>
        <footer className={`${SANS} flex h-[22px] shrink-0 items-center border-t-2 border-white bg-gradient-to-b from-[#e6eff4] to-[#d0dfe8] pt-[2px] text-[11px] text-black`}>
            <span className="w-[198px] pl-px">Seite 1 von 1</span>
            <span className="h-4 w-[51px] border-x border-[#9fc0d5]" />
            <svg viewBox="0 0 10 10" className="mt-1 mr-1 ml-auto size-[9px]"><path d="M10 0V10H0Z" fill="#3e6d9f" /></svg>
        </footer>
    </section>
);

/* ---------- Main window ---------- */

const MENU = ['Start', 'Datei', 'Ansicht', 'Einstellungen', 'Analyse/Systeminformation'];

export default function App() {
    return (
        <div className={`${SANS} relative flex h-screen flex-col overflow-hidden bg-white pt-px`}>
            <header className="flex h-7 shrink-0 items-center gap-1 rounded-t-[6px] bg-gradient-to-b from-[#2c6293] via-[#1c4373] to-[#1a3a68] pr-[9px] pl-[5px]">
                <AvLogo className="size-4" />
                <h1 className={`${TAHOMA} flex-1 text-[11px] font-bold whitespace-pre text-[#36628a]`}>{'AvERP - die kostenlose Warenwirtschaft    (DB: 127.0.0.1/3050:F:\\DB\\AVERP_DEMO.FDB)'}</h1>
                <WindowControls color="text-[#537399]" />
            </header>
            <div className="flex min-h-0 flex-1 flex-col border-x-[6px] border-b-[6px] border-[#1a3a68] bg-white">
                <nav className="mt-px flex h-[27px] shrink-0 items-end border-b border-[#b9b9b9] bg-[#0173c7] pl-px">
                    {MENU.map((item, i) => (
                        <button key={item} type="button" className={`h-[22px] text-[11px] leading-6 ${i === 0 ? 'mr-[2px] bg-white px-[6px] text-[#0173c7]' : 'px-[8px] text-white'}`}>{item}</button>
                    ))}
                    <button type="button" aria-label="Hilfe" className="mr-1 mb-1 ml-auto size-4 rounded-full bg-gradient-to-b from-[#88aede] to-[#3f66b4] text-[12px] leading-4 font-bold text-white">?</button>
                </nav>
                <Ribbon />
                <main className="flex min-h-0 flex-1 border-t-2 border-[#9db7d3] bg-white pt-[2px]">
                    <LeftPanel />
                    <section className="flex min-w-0 flex-1 flex-col border-r-[3px] border-[#9db7d3] pb-[3px] pl-[3px]">
                        <div className="flex h-[33px] shrink-0 items-center bg-[#e1e9f0]">
                            <svg viewBox="0 0 32 32" className="size-8 bg-[#5b4094]" fill="none">
                                <path d="M8.500 18C8 12 12 8.500 17 8.500C22 8.500 26 12 26 17C26 22 22.500 24.500 18 24.500" stroke="#fff" strokeWidth="2.400" />
                                <path d="M5 15L12.500 16L8 21.500Z" fill="#fff" />
                            </svg>
                            <h2 className="flex-1 text-center text-[11px] font-bold text-[#3c648c]">Reklamationsverwaltung</h2>
                        </div>
                        <div className="mt-[2px] ml-[2px] min-h-0 flex-1 overflow-hidden border-r-2 border-b-4 border-[#9db7d3] bg-[#e1e9f0]">
                            <ClaimForm />
                        </div>
                    </section>
                    <RightPanel />
                </main>
                <div className="h-[83px] shrink-0 border-t-2 border-[#9db7d3] bg-white pt-[3px] pl-[2px]">
                    <div className="flex h-[77px] justify-between border border-[#8db2cf] bg-[#e1e9f0]">
                        <div className="flex flex-col gap-px pt-[2px] text-[11px] leading-[18px] text-[#12091f]">
                            <div className="flex gap-1">
                                <button type="button" className="w-[144px] bg-[#5b4094]">Reklamationsverwaltung</button>
                                <button type="button" className="w-[169px] bg-[#5b4094]">Lieferanten - Rücklieferschein</button>
                            </div>
                            <div className="flex gap-1">
                                <button type="button" className="w-[155px] bg-[#8b2b8b]">Wareneingang - Workflow</button>
                                <button type="button" className="w-[122px] bg-[#8b2b8b]">Reklamtion erstellen</button>
                            </div>
                        </div>
                        <div className="flex w-[17px] flex-col items-center bg-[#b4cbdb]">
                            <svg viewBox="0 0 17 17" className="size-[17px] rounded-[3px] border border-[#8db2cf] bg-[#dbe8f0]"><path d="M8.500 6L12 10H5Z" fill="#2d6191" /></svg>
                            <div className="flex h-[9px] w-[15px] items-center justify-center rounded-[3px] border border-[#8db2cf] bg-[#e6eff5]">
                                <div className="h-[3px] w-[5px] border-y border-[#8db2cf]" />
                            </div>
                            <svg viewBox="0 0 17 17" className="mt-auto size-[17px] rounded-[3px] border border-[#8db2cf] bg-[#dbe8f0]"><path d="M8.500 11L12 7H5Z" fill="#2d6191" /></svg>
                        </div>
                    </div>
                </div>
            </div>
            <PrintPreview />
        </div>
    );
}
